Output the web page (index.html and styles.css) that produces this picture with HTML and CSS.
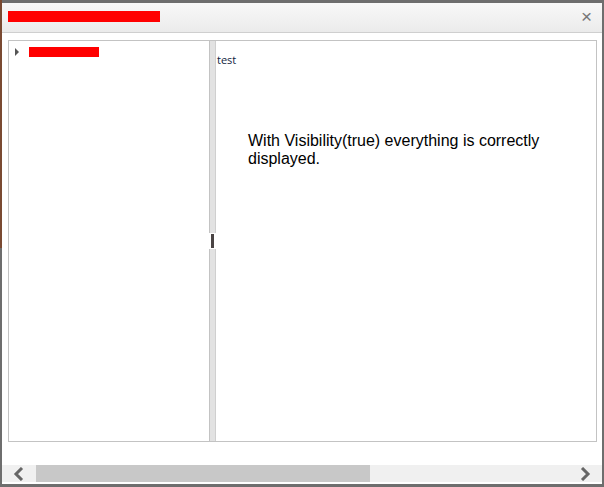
FILE: index.html
```html
<!DOCTYPE html>
<html lang="en">
<head>
    <meta charset="UTF-8">
    <title>Window</title>
    <link rel="stylesheet" href="styles.css">
</head>
<body>
    <div class="window">
        <div class="titlebar">
            <span class="title-mask"></span>
            <span class="close">&#215;</span>
        </div>
        <div class="content">
            <div class="splitter">
                <div class="pane-left">
                    <div class="tree-item">
                        <span class="tree-arrow"></span>
                        <span class="tree-mask"></span>
                    </div>
                </div>
                <div class="divider"><span class="handle"></span></div>
                <div class="pane-right">
                    <div class="small-text">test</div>
                    <p class="message">With Visibility(true) everything is correctly displayed.</p>
                </div>
            </div>
        </div>
        <div class="hscroll">
            <span class="arrow">
                <svg width="12" height="14" viewBox="0 0 12 14"><path d="M9 1 L3 7 L9 13" fill="none" stroke="#666" stroke-width="3"/></svg>
            </span>
            <div class="track"><div class="thumb"></div></div>
            <span class="arrow">
                <svg width="12" height="14" viewBox="0 0 12 14"><path d="M3 1 L9 7 L3 13" fill="none" stroke="#666" stroke-width="3"/></svg>
            </span>
        </div>
    </div>
</body>
</html>
```

FILE: styles.css
```css
html, body { margin: 0; height: 100%; }
body {
    background: linear-gradient(#7a4a32, #7a4a32) left top / 2px 248px no-repeat, #6e6e6e;
    padding: 3px 2px 0 2px;
    box-sizing: border-box;
    font-family: "Liberation Sans", Arial, sans-serif;
}
.window { width: 600px; height: 481px; background: #fff; display: flex; flex-direction: column; }
.titlebar {
    height: 29px; border-bottom: 1px solid #cfcfcf;
    background: linear-gradient(#f8f8f8, #ebebeb);
    display: flex; align-items: center; justify-content: space-between;
    padding: 0 10px 0 6px;
}
.title-mask { width: 152px; height: 11px; background: #ff0000; margin-top: -2px; }
.close { font-size: 19px; color: #777; line-height: 1; margin-top: -2px; }
.content { padding: 7px 5px 0 6px; }
.splitter { height: 400px; border: 1px solid #c3c3c3; display: flex; }
.pane-left { width: 200px; }
.tree-item { display: flex; align-items: center; padding: 6px 0 0 6px; }
.tree-arrow { width: 0; height: 0; border-left: 4px solid #555; border-top: 4px solid transparent; border-bottom: 4px solid transparent; }
.tree-mask { width: 70px; height: 10px; background: #ff0000; margin-left: 10px; }
.divider {
    width: 5px; background: #e2e2e2; border-left: 1px solid #c3c3c3; border-right: 1px solid #cfcfcf;
    display: flex; align-items: center; justify-content: center;
}
.handle { width: 3px; height: 14px; background: #4a4444; border-left: 1px solid #fff; border-right: 1px solid #fff; box-shadow: 0 0 0 1px #fff; }
.pane-right { flex: 1; padding: 11px 0 0 1px; }
.small-text { font-family: "Open Sans", sans-serif; font-size: 11px; color: #0f1c40; line-height: 15px; }
.message { margin: 65px 0 0 31px; width: 310px; font-size: 16px; line-height: 18px; color: #000; }
.hscroll { margin-top: auto; margin-bottom: 2px; height: 17px; background: #f0f0f0; display: flex; align-items: center; }
.arrow { width: 34px; display: flex; justify-content: center; }
.track { flex: 1; height: 17px; }
.thumb { width: 334px; height: 100%; background: #c8c8c8; }
```
